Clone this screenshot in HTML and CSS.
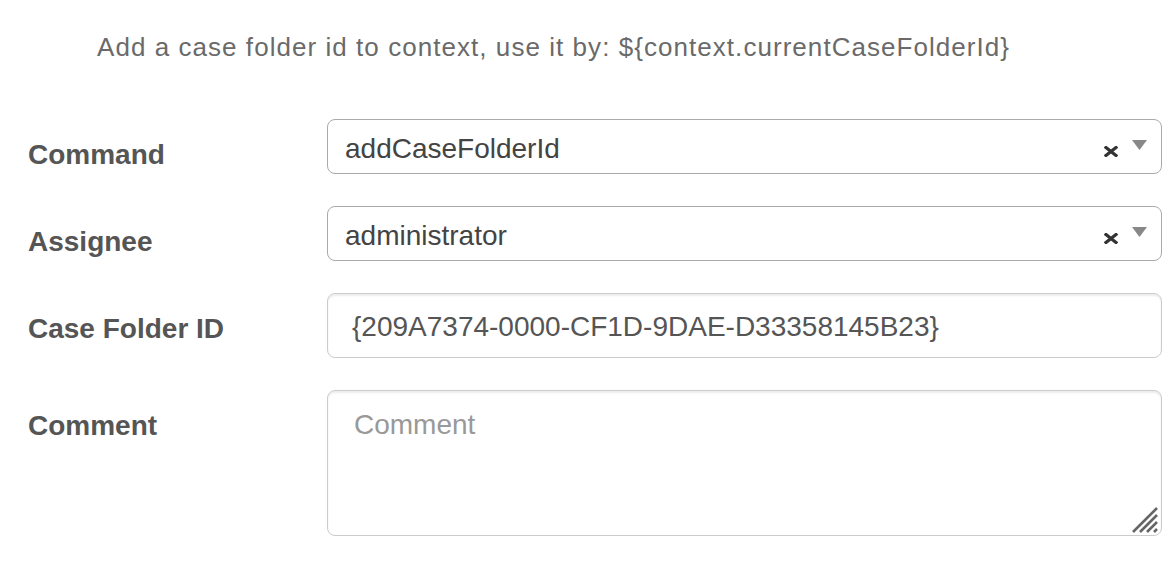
FILE: index.html
```html
<!DOCTYPE html>
<html>
<head>
<meta charset="utf-8">
<link rel="stylesheet" href="styles.css">
</head>
<body>
<div class="page">
  <p class="intro">Add a case folder id to context, use it by: ${context.currentCaseFolderId}</p>
  <form class="form">
    <div class="row">
      <label class="label">Command</label>
      <div class="select">
        <span class="select-value">addCaseFolderId</span>
        <span class="select-icons">
          <svg class="clear" width="14" height="11" viewBox="0 0 14 11"><path d="M2 1.5 L12 9.5 M12 1.5 L2 9.5" stroke="#333" stroke-width="3.2" stroke-linecap="square"/></svg>
          <svg class="caret" width="15" height="10" viewBox="0 0 15 10"><path d="M0 0 H15 L7.5 10 Z" fill="#888"/></svg>
        </span>
      </div>
    </div>
    <div class="row">
      <label class="label">Assignee</label>
      <div class="select">
        <span class="select-value">administrator</span>
        <span class="select-icons">
          <svg class="clear" width="14" height="11" viewBox="0 0 14 11"><path d="M2 1.5 L12 9.5 M12 1.5 L2 9.5" stroke="#333" stroke-width="3.2" stroke-linecap="square"/></svg>
          <svg class="caret" width="15" height="10" viewBox="0 0 15 10"><path d="M0 0 H15 L7.5 10 Z" fill="#888"/></svg>
        </span>
      </div>
    </div>
    <div class="row">
      <label class="label">Case Folder ID</label>
      <input class="input" type="text" value="{209A7374-0000-CF1D-9DAE-D33358145B23}">
    </div>
    <div class="row">
      <label class="label">Comment</label>
      <div class="textarea-wrap">
        <textarea class="textarea" placeholder="Comment"></textarea>
        <svg class="grip" width="28" height="28" viewBox="0 0 28 28">
          <path d="M2 27 L26 3 M9 27 L26 10 M16 27 L26 17 M23 27 L26 24" stroke="#666" stroke-width="2.6" stroke-linecap="butt"/>
        </svg>
      </div>
    </div>
  </form>
</div>
</body>
</html>
```

FILE: styles.css
```css
html, body {
  margin: 0;
  padding: 0;
  background: #fff;
}

.page {
  font-family: "Liberation Sans", Arial, Helvetica, sans-serif;
  padding: 0 14px 0 28px;
}

.intro {
  margin: 0;
  padding: 32px 0 0 69px;
  font-size: 26px;
  line-height: 30px;
  color: #6a6a6a;
  letter-spacing: 1.05px;
}

.form {
  display: flex;
  flex-direction: column;
  gap: 32px;
  margin-top: 57px;
}

.row {
  display: flex;
  align-items: flex-start;
}

.label {
  width: 299px;
  flex: none;
  padding-top: 19px;
  font-size: 28px;
  line-height: 34px;
  font-weight: bold;
  color: #555;
}

.select {
  flex: 1;
  height: 55px;
  box-sizing: border-box;
  border: 1px solid #aaa;
  border-radius: 8px;
  display: flex;
  align-items: center;
  padding: 4px 14px 0 17px;
}

.select-value {
  flex: 1;
  font-size: 28px;
  color: #444;
}

.select-icons {
  display: flex;
  align-items: flex-start;
  gap: 14px;
  margin-top: 0;
}

.clear {
  margin-top: 6px;
}

.input {
  flex: 1;
  height: 65px;
  box-sizing: border-box;
  border: 1px solid #ccc;
  border-radius: 8px;
  box-shadow: inset 0 2px 2px rgba(0,0,0,0.075);
  padding: 2px 24px 0;
  font-family: "Liberation Sans", Arial, Helvetica, sans-serif;
  font-size: 28px;
  color: #555;
  margin: 0;
  outline: none;
}

.textarea-wrap {
  flex: 1;
  position: relative;
  display: flex;
}

.textarea {
  flex: 1;
  height: 146px;
  box-sizing: border-box;
  border: 1px solid #ccc;
  border-radius: 8px;
  box-shadow: inset 0 2px 2px rgba(0,0,0,0.075);
  padding: 14px 26px 12px;
  font-family: "Liberation Sans", Arial, Helvetica, sans-serif;
  font-size: 28px;
  line-height: 40px;
  color: #555;
  resize: none;
  margin: 0;
  outline: none;
}

.textarea::placeholder {
  color: #999;
}

.grip {
  position: absolute;
  right: 3px;
  bottom: 3px;
}
```
